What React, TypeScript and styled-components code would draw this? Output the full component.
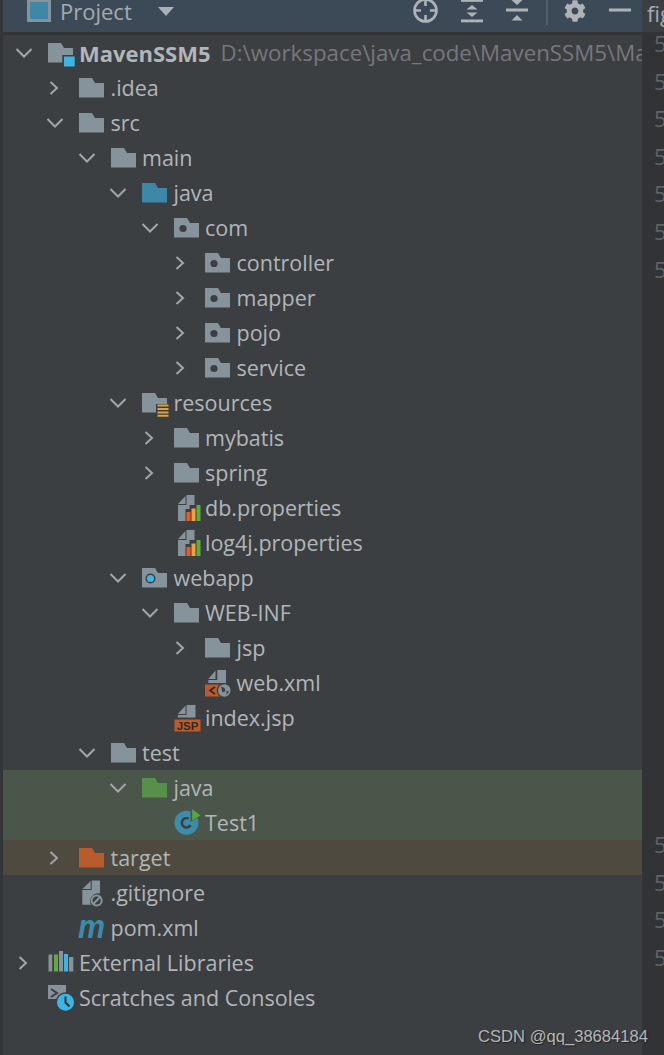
import React from "react"
import styled, { createGlobalStyle } from "styled-components"
import { FaCog } from "react-icons/fa"

const Global = createGlobalStyle`
  html, body { margin: 0; padding: 0; background: #3c3f41; }
  body { width: 664px; height: 1055px; overflow: hidden; font-family: "Open Sans", "Noto Sans", sans-serif; }
  svg { overflow: visible; flex: none; }
`

const Page = styled.div`
  position: relative;
  width: 664px;
  height: 1055px;
  display: grid;
  grid-template-columns: 642px 22px;
  overflow: hidden;
  background: #3c3f41;
`

const Panel = styled.div`
  display: flex;
  flex-direction: column;
  border-left: 3px solid #333639;
  min-width: 0;
`

const Header = styled.div`
  box-sizing: border-box;
  height: 35px;
  flex: none;
  display: flex;
  align-items: center;
  background: #3c4a58;
  border-bottom: 3px solid #323437;
  padding: 0 0 10px 24px;
`

const HeaderTitle = styled.span`
  font-size: 22px;
  margin-left: 8px;
  color: #a4abb0;
  line-height: 24px;
`

const DropTriangle = styled.svg`
  margin-left: 26px;
`

const HeaderTools = styled.div`
  margin-left: auto;
  display: flex;
  align-items: center;
  gap: 23px;
  padding-right: 11px;
`

const ToolDivider = styled.i`
  width: 2px;
  height: 28px;
  background: #53606c;
  margin: 0 -7px 0 -5px;
`

const Tree = styled.div`
  display: flex;
  flex-direction: column;
`

const Row = styled.div<{ $level: number; $tint?: string }>`
  height: 35px;
  display: flex;
  align-items: center;
  padding-left: ${(p) => 8.5 + p.$level * 31.5}px;
  background: ${(p) => p.$tint || "transparent"};
  white-space: nowrap;
  overflow: hidden;
`

const ArrowSlot = styled.span`
  width: 36px;
  flex: none;
  display: flex;
  align-items: center;
`

const IconSlot = styled.span`
  width: 31.5px;
  flex: none;
  display: flex;
  align-items: center;
`

const Label = styled.span<{ $bold?: boolean }>`
  font-size: ${(p) => (p.$bold ? 22 : 21.5)}px;
  line-height: 30px;
  color: #b1b6b9;
  font-weight: ${(p) => (p.$bold ? 700 : 400)};
`

const Path = styled.span`
  font-size: 22.3px;
  line-height: 30px;
  color: #74787b;
  margin-left: 10px;
`

const Gutter = styled.div`
  background: #313335;
  display: flex;
  flex-direction: column;
  color: #5f6469;
  font-size: 22px;
  overflow: hidden;
`

const GutterTab = styled.div`
  box-sizing: border-box;
  height: 35px;
  background: #3c3f41;
  border-bottom: 3px solid #323437;
  color: #a4abb0;
  font-size: 22px;
  padding-left: 5px;
  line-height: 26px;
  flex: none;
  overflow: hidden;
`

const GutterNumbers = styled.div`
  flex: 1;
  min-height: 0;
  overflow: hidden;
`

const GutterNum = styled.div<{ $gap?: number }>`
  height: 37.6px;
  line-height: 37.6px;
  padding-left: 12px;
  margin-top: ${(p) => p.$gap || 0}px;
`

const Watermark = styled.div`
  position: absolute;
  left: 478px;
  top: 1027px;
  font-family: "Liberation Sans", Arial, sans-serif;
  font-size: 16.6px;
  line-height: 20px;
  color: #b4b6b7;
  text-shadow: 1px 1px 1px #222;
  white-space: nowrap;
`

const GRAY = "#87939a"
const DARK = "#3c3f41"

const Chevron = ({ open }: { open?: boolean }) => (
  <svg width="22" height="22" viewBox="0 0 22 22" fill="none" stroke="#a2a6a9" strokeWidth="2">
    {open ? <polyline points="4.5,7 12,14.5 19.5,7" /> : <polyline points="7.5,5 14,11 7.5,17" />}
  </svg>
)

const Folder = ({ color = GRAY, children }: { color?: string; children?: React.ReactNode }) => (
  <svg width="27" height="24" viewBox="0 0 27 24">
    <path d="M0 2h13l3 5h9v14.5H0z" fill={color} />
    {children}
  </svg>
)

const PackageFolder = () => (
  <Folder>
    <circle cx="9" cy="12.5" r="3.6" fill={DARK} />
  </Folder>
)

const WebFolder = () => (
  <Folder>
    <circle cx="8.5" cy="12.5" r="5" fill={DARK} />
    <circle cx="8.5" cy="12.5" r="3.6" fill="#3cb5e4" />
  </Folder>
)

const ResourceFolder = () => (
  <Folder>
    <rect x="14" y="13" width="13" height="13" fill={DARK} />
    <path d="M15.5 14.5h11M15.5 18h11M15.5 21.5h11M15.5 24.7h11" stroke="#d9a343" strokeWidth="2" />
  </Folder>
)

const ModuleFolder = () => (
  <Folder>
    <rect x="14.3" y="14" width="12.5" height="11.5" fill={DARK} />
    <rect x="16" y="15.5" width="10.7" height="10" fill="#3cb5e4" />
  </Folder>
)

const PropsFile = () => (
  <svg width="27" height="28" viewBox="0 0 27 28">
    <path d="M4 10l7.5-8v8zM4 11h8.5V1h8v10h-5v4h-4v12H4z" fill={GRAY} />
    <rect x="12.5" y="18" width="4" height="9" fill="#ef5b1f" />
    <rect x="17.5" y="14.5" width="4" height="12.5" fill="#e8a33d" />
    <rect x="22.5" y="11" width="4" height="16" fill="#5fab3f" />
  </svg>
)

const XmlFile = () => (
  <svg width="27" height="28" viewBox="0 0 27 28">
    <path d="M3.3 10L10.5 1.5V10zM3.3 11h9V1h8.7v13H3.3z" fill={GRAY} />
    <rect x="0" y="15.5" width="17" height="12" fill="#bd5b2b" />
    <path d="M10 18l-5 3.5 5 3.5" fill="none" stroke="#2b2b2b" strokeWidth="1.8" />
    <circle cx="19.3" cy="21.5" r="7.6" fill={DARK} />
    <circle cx="19.3" cy="21.5" r="6.2" fill={GRAY} />
    <path d="M16 17.5l3.5 1.5 1 3-3 1.5zM21.5 22l2.5.5-2.5 3.5z" fill={DARK} />
  </svg>
)

const JspFile = () => (
  <svg width="27" height="28" viewBox="0 0 27 28">
    <path d="M3.8 10l7.7-8.5V10zM3.8 11h8.7V1h9v12.5H3.8z" fill={GRAY} />
    <rect x="0.5" y="15.5" width="26" height="12" fill="#bd5b2b" />
    <text x="13.5" y="25.5" textAnchor="middle" fontFamily="'Liberation Sans', sans-serif" fontSize="11.5" fontWeight="700" fill="#2f2b28">JSP</text>
  </svg>
)

const ClassIcon = () => (
  <svg width="27" height="28" viewBox="0 0 27 28">
    <circle cx="12.5" cy="13.8" r="12" fill="#3d8cab" />
    <circle cx="12.5" cy="13.8" r="4.6" fill="none" stroke={DARK} strokeWidth="2.6" strokeDasharray="21 8" transform="rotate(30 12.5 13.8)" />
    <path d="M16.5 0v13l11-6.5z" fill="#4b564b" />
    <path d="M18.2 0v11.5l8.3-5z" fill="#58a83a" />
  </svg>
)

const GitFile = () => (
  <svg width="27" height="28" viewBox="0 0 27 28">
    <path d="M3.3 10l8.4-8V10zM3.3 11h9.4V1.5H21v13a8 8 0 0 0-9 11.3H3.3z" fill={GRAY} />
    <circle cx="17.7" cy="21.5" r="5" fill="none" stroke={GRAY} strokeWidth="2" />
    <path d="M14.2 25l7-7" stroke={GRAY} strokeWidth="2" />
  </svg>
)

const MavenIcon = () => (
  <svg width="27" height="28" viewBox="0 0 27 28">
    <text x="-1" y="24" fontFamily="'Liberation Sans', sans-serif" fontStyle="italic" fontWeight="700" fontSize="34" fill="#3a8cab" textLength="27" lengthAdjust="spacingAndGlyphs">m</text>
  </svg>
)

const LibraryIcon = () => (
  <svg width="27" height="24" viewBox="0 0 27 24">
    <rect x="0.5" y="3.5" width="3.7" height="17" fill={GRAY} />
    <rect x="6" y="3.5" width="4" height="17" fill="#5fab3f" />
    <rect x="11" y="0" width="4" height="20.5" fill={GRAY} />
    <rect x="16" y="3" width="4" height="17.5" fill="#3cb5e4" />
    <rect x="21" y="6" width="4.3" height="14.5" fill={GRAY} />
  </svg>
)

const ScratchIcon = () => (
  <svg width="30" height="28" viewBox="0 0 30 28">
    <rect x="0" y="1" width="18" height="14" fill={GRAY} />
    <path d="M3 5l6 4-6 4" fill="none" stroke={DARK} strokeWidth="2" />
    <circle cx="17.5" cy="18.2" r="10" fill={DARK} />
    <circle cx="17.5" cy="18.2" r="8.5" fill="#3cb5e4" />
    <path d="M17.5 12.5v6l4 4" fill="none" stroke="#26323a" strokeWidth="2" />
  </svg>
)

type Item = { name: string; level: number; arrow?: "open" | "closed"; icon: React.ReactNode; tint?: string; path?: string; bold?: boolean }

const items: Item[] = [
  { name: "MavenSSM5", level: 0, arrow: "open", icon: <ModuleFolder />, bold: true, path: "D:\\workspace\\java_code\\MavenSSM5\\Ma" },
  { name: ".idea", level: 1, arrow: "closed", icon: <Folder /> },
  { name: "src", level: 1, arrow: "open", icon: <Folder /> },
  { name: "main", level: 2, arrow: "open", icon: <Folder /> },
  { name: "java", level: 3, arrow: "open", icon: <Folder color="#3d87a8" /> },
  { name: "com", level: 4, arrow: "open", icon: <PackageFolder /> },
  { name: "controller", level: 5, arrow: "closed", icon: <PackageFolder /> },
  { name: "mapper", level: 5, arrow: "closed", icon: <PackageFolder /> },
  { name: "pojo", level: 5, arrow: "closed", icon: <PackageFolder /> },
  { name: "service", level: 5, arrow: "closed", icon: <PackageFolder /> },
  { name: "resources", level: 3, arrow: "open", icon: <ResourceFolder /> },
  { name: "mybatis", level: 4, arrow: "closed", icon: <Folder /> },
  { name: "spring", level: 4, arrow: "closed", icon: <Folder /> },
  { name: "db.properties", level: 4, icon: <PropsFile /> },
  { name: "log4j.properties", level: 4, icon: <PropsFile /> },
  { name: "webapp", level: 3, arrow: "open", icon: <WebFolder /> },
  { name: "WEB-INF", level: 4, arrow: "open", icon: <Folder /> },
  { name: "jsp", level: 5, arrow: "closed", icon: <Folder /> },
  { name: "web.xml", level: 5, icon: <XmlFile /> },
  { name: "index.jsp", level: 4, icon: <JspFile /> },
  { name: "test", level: 2, arrow: "open", icon: <Folder /> },
  { name: "java", level: 3, arrow: "open", icon: <Folder color="#57904a" />, tint: "#4b564b" },
  { name: "Test1", level: 4, icon: <ClassIcon />, tint: "#4b564b" },
  { name: "target", level: 1, arrow: "closed", icon: <Folder color="#b85c2c" />, tint: "#4f4a40" },
  { name: ".gitignore", level: 1, icon: <GitFile /> },
  { name: "pom.xml", level: 1, icon: <MavenIcon /> },
  { name: "External Libraries", level: 0, arrow: "closed", icon: <LibraryIcon /> },
  { name: "Scratches and Consoles", level: 0, icon: <ScratchIcon /> },
]

const TOOL = "#aeb3b7"

const App = () => {
  return (
    <Page>
      <Global />
      <Panel>
        <Header>
          <svg width="25" height="22" viewBox="0 0 25 22">
            <rect x="0" y="-1" width="24" height="23" fill={GRAY} />
            <rect x="3" y="2" width="18" height="17" fill="#3d87a8" />
          </svg>
          <HeaderTitle>Project</HeaderTitle>
          <DropTriangle width="16" height="9" viewBox="0 0 16 9">
            <path d="M0 0h16L8 9z" fill="#a9b0b6" />
          </DropTriangle>
          <HeaderTools>
            <svg width="25" height="22" viewBox="0 0 25 22" fill="none" stroke={TOOL} strokeWidth="2.6">
              <circle cx="12.5" cy="10.5" r="11" />
              <path d="M12.5 0v6M12.5 15v6M2 10.5h6M17 10.5h6" />
            </svg>
            <svg width="22" height="22" viewBox="0 0 22 22" fill={TOOL}>
              <rect y="-1" width="22" height="2.8" />
              <rect y="19.5" width="22" height="2.8" />
              <path d="M11 5l5.5 4.5h-11zM11 17l5.5-4.5h-11z" />
            </svg>
            <svg width="22" height="22" viewBox="0 0 22 22" fill={TOOL}>
              <rect y="8.5" width="22" height="3" />
              <path d="M11 5l-5.5-5h11zM11 15l5.5 5.5h-11z" />
            </svg>
            <ToolDivider />
            <FaCog size={22} color={TOOL} />
            <svg width="22" height="22" viewBox="0 0 22 22"><rect y="8.5" width="22" height="3" fill={TOOL} /></svg>
          </HeaderTools>
        </Header>
        <Tree>
          {items.map((item, i) => (
            <Row key={i} $level={item.level} $tint={item.tint}>
              <ArrowSlot>{item.arrow && <Chevron open={item.arrow === "open"} />}</ArrowSlot>
              <IconSlot>{item.icon}</IconSlot>
              <Label $bold={item.bold}>{item.name}</Label>
              {item.path && <Path>{item.path}</Path>}
            </Row>
          ))}
        </Tree>
      </Panel>
      <Gutter>
        <GutterTab>fig</GutterTab>
        <GutterNumbers>
          <GutterNum $gap={-10}>5</GutterNum>
          {[1, 2, 3, 4, 5, 6].map((n) => <GutterNum key={n}>5</GutterNum>)}
          <GutterNum $gap={538}>5</GutterNum>
          <GutterNum>5</GutterNum>
          <GutterNum>5</GutterNum>
          <GutterNum>5</GutterNum>
        </GutterNumbers>
      </Gutter>
      <Watermark>CSDN @qq_38684184</Watermark>
    </Page>
  )
}

export default App
